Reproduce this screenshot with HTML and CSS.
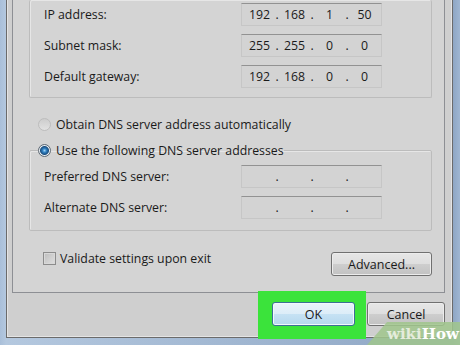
FILE: index.html
```
<!DOCTYPE html>
<html lang="en">
<head>
<meta charset="UTF-8" />
<title>Internet Protocol Version 4 Properties</title>
<link rel="stylesheet" href="styles.css">
</head>
<body>

<div class="window">
  <div class="tabpage">

    <div class="group ip-group">
      <div class="row">
        <span class="label">IP address:</span>
        <div class="ipfield"><span>192</span><i>.</i><span>168</span><i>.</i><span>1</span><i>.</i><span>50</span></div>
      </div>
      <div class="row">
        <span class="label">Subnet mask:</span>
        <div class="ipfield"><span>255</span><i>.</i><span>255</span><i>.</i><span>0</span><i>.</i><span>0</span></div>
      </div>
      <div class="row">
        <span class="label">Default gateway:</span>
        <div class="ipfield"><span>192</span><i>.</i><span>168</span><i>.</i><span>0</span><i>.</i><span>0</span></div>
      </div>
    </div>

    <div class="option">
      <span class="radio disabled"></span>
      <span>Obtain DNS server address automatically</span>
    </div>

    <fieldset class="group dns-group">
      <legend class="option">
        <span class="radio checked"></span>
        <span class="legend-text">Use the following DNS server addresses</span>
      </legend>
      <div class="rows">
        <div class="row">
          <span class="label">Preferred DNS server:</span>
          <div class="ipfield"><span></span><i>.</i><span></span><i>.</i><span></span><i>.</i><span></span></div>
        </div>
        <div class="row">
          <span class="label">Alternate DNS server:</span>
          <div class="ipfield"><span></span><i>.</i><span></span><i>.</i><span></span><i>.</i><span></span></div>
        </div>
      </div>
    </fieldset>

    <div class="footer-row">
      <label class="check"><span class="box"></span>Validate settings upon exit</label>
      <button class="btn advanced">Advanced...</button>
    </div>

  </div>

  <div class="dialog-buttons">
    <div class="highlight"><button class="btn ok">OK</button></div>
    <button class="btn cancel">Cancel</button>
  </div>
</div>

<div class="watermark"><span class="wiki">wiki</span>How</div>

</body>
</html>
```

FILE: styles.css
```
body {
  margin: 0;
  height: 345px;
  overflow: hidden;
  font-family: "Open Sans", "Noto Sans", sans-serif;
  font-size: 12.3px;
  color: #1a1a1a;
  background: linear-gradient(90deg, #a9bfd9 0, #b4c8df 6px, #8ea6c4 453px, #9fb6d2 460px);
  position: relative;
}
.window {
  margin-left: 6px;
  width: 433px;
  height: 337px;
  padding: 0 7px 0 5px;
  background-color: #cfcfcf;
  border: 1px solid #6b6b6b;
  border-top: none;
  box-shadow: inset 1px 0 0 #e4e4e4, inset -1px 0 0 #e4e4e4, inset 0 -1px 0 #e4e4e4;
}
.tabpage {
  background-color: #d4d4d4;
  border: 1px solid #8d8f94;
  border-top: none;
  padding: 0 12px 16px 16px;
}
.group {
  border: 1px solid #bcbcbc;
  box-shadow: inset 1px 1px 0 #e6e6e6;
  border-radius: 2px;
  margin: 0;
}
.ip-group {
  border-top: none;
  padding: 3px 0 9px 14px;
  display: flex;
  flex-direction: column;
  gap: 8px;
}
.row {
  display: flex;
  align-items: center;
  height: 23px;
}
.label {
  width: 197px;
}
.ipfield {
  display: flex;
  align-items: center;
  box-sizing: border-box;
  width: 141px;
  height: 23px;
  padding-left: 3px;
  background-color: #d3d3d3;
  border: 1px solid #c6c6c6;
  border-top-color: #929292;
}
.ipfield span {
  width: 29px;
  text-align: center;
}
.ipfield i {
  width: 6px;
  font-style: normal;
  text-align: center;
}
.option {
  display: flex;
  align-items: center;
  gap: 5px;
  height: 16px;
  margin: 18px 0 0 9px;
}
.radio {
  width: 11px;
  height: 11px;
  border-radius: 50%;
  flex: none;
}
.radio.disabled {
  border: 1px solid #bdbdbd;
  background: linear-gradient(#cdcdcd, #e2e2e2);
}
.radio.checked {
  border: 1px solid #5f6a75;
  background: radial-gradient(circle, #9fd3f5 0, #2f7fc0 2px, #1c4f80 4px, #e8eef3 5px, #c8ced3 6px);
}
.dns-group {
  margin-top: 10px;
  padding: 0;
}
.dns-group legend.option {
  margin: 0 0 0 8px;
  padding: 0;
}
.legend-text {
  white-space: nowrap;
}
.rows {
  padding: 7px 0 11px 14px;
  display: flex;
  flex-direction: column;
  gap: 8px;
}
.footer-row {
  display: flex;
  justify-content: space-between;
  align-items: flex-start;
  margin: 21px 0 0 14px;
}
.check {
  display: flex;
  align-items: center;
  gap: 4px;
  height: 16px;
  margin-top: -2px;
}
.check .box {
  width: 11px;
  height: 11px;
  border: 1px solid #8c8c8c;
  background: linear-gradient(135deg, #bdbdbd, #e0e0e0);
  box-shadow: inset 0 0 0 1px #d8d8d8;
}
.btn {
  font-family: inherit;
  font-size: 12.5px;
  color: #1a1a1a;
  height: 24px;
  padding: 0;
  border: 1px solid #707070;
  border-radius: 3px;
  background: linear-gradient(#e6e6e6 0, #dedede 50%, #cecece 50%, #c2c2c2 100%);
  box-shadow: inset 0 0 0 1px #ececec;
}
.advanced {
  width: 101px;
}
.dialog-buttons {
  display: flex;
  justify-content: flex-end;
  align-items: flex-start;
  gap: 1px;
  margin-top: -2px;
}
.highlight {
  background-color: #3be33b;
  padding: 11px 11px 13px 14px;
}
.ok {
  display: block;
  width: 83px;
  border-color: #3c6f96;
  background: linear-gradient(#e9f3fa 0, #dcedf8 50%, #c6e2f4 50%, #b6d8ee 100%);
  box-shadow: inset 0 0 0 1px #f2f8fc;
}
.cancel {
  width: 78px;
  margin-top: 11px;
}
.watermark {
  position: absolute;
  right: 0;
  bottom: 0;
  width: 93px;
  height: 23px;
  padding: 4px 0 0 20px;
  box-sizing: border-box;
  background-color: rgba(160, 198, 140, 0.85);
  clip-path: polygon(20px 0, 100% 0, 100% 100%, 0 100%);
  font-family: "DejaVu Serif", serif;
  font-weight: bold;
  font-size: 15px;
  line-height: 17px;
  color: #fff;
}
.watermark .wiki {
  color: #e4ecdc;
}
```
